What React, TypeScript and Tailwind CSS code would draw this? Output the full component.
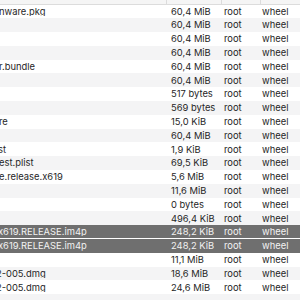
import React from "react";

type Row = { name: string; nameCls: string; size: string; sel?: boolean };

const rows: Row[] = [
  { name: "nware.pkg", nameCls: "ml-[-1px]", size: "60,4 MiB" },
  { name: "", nameCls: "", size: "60,4 MiB" },
  { name: "", nameCls: "", size: "60,4 MiB" },
  { name: "", nameCls: "", size: "60,4 MiB" },
  { name: "r.bundle", nameCls: "ml-[-1px]", size: "60,4 MiB" },
  { name: "", nameCls: "", size: "60,4 MiB" },
  { name: "", nameCls: "", size: "517 bytes" },
  { name: "", nameCls: "", size: "569 bytes" },
  { name: "re", nameCls: "ml-[-1px]", size: "15,0 KiB" },
  { name: "", nameCls: "", size: "60,4 MiB" },
  { name: "st", nameCls: "ml-[-2px]", size: "1,9 KiB" },
  { name: "est.plist", nameCls: "ml-[-1px]", size: "69,5 KiB" },
  { name: "e.release.x619", nameCls: "ml-[-1px]", size: "5,6 MiB" },
  { name: "", nameCls: "", size: "11,6 MiB" },
  { name: "", nameCls: "", size: "0 bytes" },
  { name: "", nameCls: "", size: "496,4 KiB" },
  { name: "x619.RELEASE.im4p", nameCls: "ml-[-2px]", size: "248,2 KiB", sel: true },
  { name: "x619.RELEASE.im4p", nameCls: "ml-[-2px]", size: "248,2 KiB", sel: true },
  { name: "", nameCls: "", size: "11,1 MiB" },
  { name: "2-005.dmg", nameCls: "ml-[-4px]", size: "18,6 MiB" },
  { name: "2-005.dmg", nameCls: "ml-[-4px]", size: "24,6 MiB" },
  { name: "", nameCls: "", size: "" },
];

export default function App() {
  return (
    <div
      className="w-[300px] h-[300px] overflow-hidden bg-white text-[9.4px] text-[#262626]"
      style={{ fontFamily: "Inter, 'Liberation Sans', sans-serif" }}
    >
      <div className="flex h-[4.5px] bg-[#f5f5f5] border-b border-[#dcdcdc]">
        <div className="w-[166px] shrink-0" />
        <div className="w-[55px] shrink-0 border-l border-[#dcdcdc]" />
        <div className="w-[39px] shrink-0 border-l border-[#dcdcdc]" />
        <div className="flex-1 border-l border-[#dcdcdc]" />
      </div>
      {rows.map((r, i) => {
        const base = r.sel
          ? "bg-[#6f6f6f] text-[#f2f2f2]"
          : i % 2 === 0
          ? "bg-white"
          : "bg-[#f4f4f5]";
        const sep = r.sel && i === 16 ? "border-b border-white" : "";
        return (
          <div key={i} className={`flex items-center h-[13.8px] leading-none ${base} ${sep}`}>
            <div className="w-[166px] shrink-0 overflow-hidden whitespace-nowrap">
              <span className={`block ${r.nameCls}`}>{r.name}</span>
            </div>
            <div className="w-[55px] shrink-0 pl-[5px] whitespace-nowrap">{r.size}</div>
            <div className="w-[39px] shrink-0 pl-[3px]">{r.size ? "root" : ""}</div>
            <div className="flex-1 pl-[2px]">{r.size ? "wheel" : ""}</div>
          </div>
        );
      })}
    </div>
  );
}
